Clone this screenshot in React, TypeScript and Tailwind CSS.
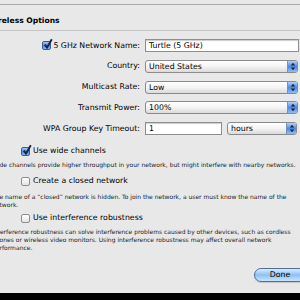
import React from "react"

const font = "font-['DejaVu_Sans','Liberation_Sans',sans-serif]"

function Checkbox({ checked }: { checked?: boolean }) {
    if (checked) {
        return (
            <span className="relative block h-[9px] w-[9px] shrink-0 rounded-[2px] border border-[#3b5d9a] bg-gradient-to-b from-[#a6c9f4] via-[#4a89df] to-[#86b7f1]">
                <svg viewBox="0 0 10 10" className="absolute -top-[3px] left-[0px] h-[10px] w-[10px] overflow-visible">
                    <path d="M1.8 5.6 L4 8.6 L8.8 0.2" fill="none" stroke="#14264a" strokeWidth="1.9" />
                </svg>
            </span>
        )
    }
    return (
        <span className="block h-[9px] w-[9px] shrink-0 rounded-[2px] border border-[#8d8d8d] bg-gradient-to-b from-white to-[#e2e2e2]" />
    )
}

function Stepper() {
    return (
        <span className="flex w-[10px] shrink-0 items-center justify-center border-l border-[#7193c4] bg-gradient-to-b from-[#b3d1f7] via-[#4b8ae2] to-[#90bdf3]">
            <svg viewBox="0 0 6 9" className="h-[9px] w-[6px]">
                <path d="M3 0.8 L5.2 3.4 L0.8 3.4 Z" fill="#15233d" />
                <path d="M3 8.2 L5.2 5.6 L0.8 5.6 Z" fill="#15233d" />
            </svg>
        </span>
    )
}

function Popup({ value, width }: { value: string; width: string }) {
    return (
        <div className={`flex h-[13px] items-stretch overflow-hidden rounded-[3px] border border-[#8a8a8a] bg-gradient-to-b from-white via-[#f4f4f4] to-[#dadada] ${width}`}>
            <span className="flex-1 pl-[3px] text-[7.8px] leading-[11px] text-black">{value}</span>
            <Stepper />
        </div>
    )
}

function TextField({ value, width }: { value: string; width: string }) {
    return (
        <div className={`h-[13px] border border-[#8e8e8e] bg-white pl-[3px] text-[7.8px] leading-[11px] text-black shadow-[inset_0_1px_1px_rgba(0,0,0,0.2)] ${width}`}>
            {value}
        </div>
    )
}

function Label({ children }: { children: React.ReactNode }) {
    return (
        <div className="flex h-[13px] items-center justify-end gap-[2px] text-[7.8px] text-black">{children}</div>
    )
}

function Option({ checked, label }: { checked?: boolean; label: string }) {
    return (
        <div className="flex h-[10px] items-center gap-[3px] pl-[31px] text-[7.8px] text-black">
            <Checkbox checked={checked} />
            <span>{label}</span>
        </div>
    )
}

function Note({ lines }: { lines: string[] }) {
    return (
        <div className="pl-[2px] text-[6px] leading-[8px] text-[#1b1b1b]">
            {lines.map((l) => (
                <div key={l} className="whitespace-nowrap">{l}</div>
            ))}
        </div>
    )
}

export default function App() {
    return (
        <div className={`flex h-[300px] w-[300px] flex-col overflow-hidden bg-[#e8e8e8] ${font}`}>
            <div className="-ml-[10px] flex h-[293px] w-[320px] shrink-0 flex-col">
                {/* top edge */}
                <div className="h-[5px] border-b border-[#a9a9a9]" />

                {/* header */}
                <div className="h-[26px] border-b border-[#c4c4c4] pt-[12px] text-[7.6px] font-bold leading-[8px] text-black">
                    <div className="-ml-[3px]">Wireless Options</div>
                </div>

                {/* settings grid */}
                <div className="grid grid-cols-[150px_154px] gap-x-[5px] gap-y-[7.75px] pt-[8px]">
                    <Label>
                        <Checkbox checked />
                        <span>5 GHz Network Name:</span>
                    </Label>
                    <TextField value="Turtle (5 GHz)" width="w-[154px]" />

                    <Label>Country:</Label>
                    <Popup value="United States" width="w-[153px]" />

                    <Label>Multicast Rate:</Label>
                    <Popup value="Low" width="w-[153px]" />

                    <Label>Transmit Power:</Label>
                    <Popup value="100%" width="w-[153px]" />

                    <Label>WPA Group Key Timeout:</Label>
                    <div className="flex gap-[5px]">
                        <TextField value="1" width="w-[77px]" />
                        <Popup value="hours" width="w-[70px]" />
                    </div>
                </div>

                <div className="mt-[11px]">
                    <Option checked label="Use wide channels" />
                </div>
                <div className="mt-[5px]">
                    <Note lines={["Wide channels provide higher throughput in your network, but might interfere with nearby networks."]} />
                </div>

                <div className="mt-[7px]">
                    <Option label="Create a closed network" />
                </div>
                <div className="mt-[7px]">
                    <Note
                        lines={[
                            "The name of a \u201cclosed\u201d network is hidden. To join the network, a user must know the name of the",
                            "network.",
                        ]}
                    />
                </div>

                <div className="mt-[4px]">
                    <Option label="Use interference robustness" />
                </div>
                <div className="mt-[5px]">
                    <Note
                        lines={[
                            "Interference robustness can solve interference problems caused by other devices, such as cordless",
                            "phones or wireless video monitors. Using interference robustness may affect overall network",
                            "performance.",
                        ]}
                    />
                </div>

                <div className="mt-auto flex justify-end pb-[11px] pr-[4px]">
                    <button className="h-[14px] w-[52px] rounded-full border border-[#4d6da3] bg-gradient-to-b from-[#dcecfd] via-[#8dbff4] to-[#c9e5fe] text-[7.8px] leading-[12px] text-black shadow-[0_1px_1px_rgba(0,0,0,0.15)]">
                        Done
                    </button>
                </div>
            </div>
            <div className="h-[7px] shrink-0 bg-black" />
        </div>
    )
}
